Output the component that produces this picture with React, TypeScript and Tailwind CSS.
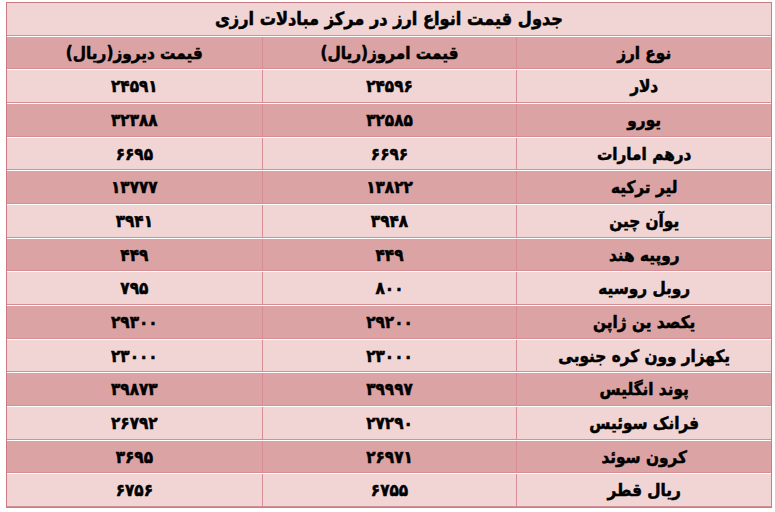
import React from "react";

const toFa = (s: string) => s.replace(/\d/g, (d) => "۰۱۲۳۴۵۶۷۸۹"[Number(d)]);

const rows: [string, string, string][] = [
  ["دلار", "24596", "24591"],
  ["یورو", "32585", "32388"],
  ["درهم امارات", "6696", "6695"],
  ["لیر ترکیه", "13822", "13777"],
  ["یوآن چین", "3948", "3941"],
  ["روپیه هند", "449", "449"],
  ["روبل روسیه", "800", "795"],
  ["یکصد ین ژاپن", "29200", "29300"],
  ["یکهزار وون کره جنوبی", "23000", "23000"],
  ["پوند انگلیس", "39997", "39873"],
  ["فرانک سوئیس", "27290", "26792"],
  ["کرون سوئد", "26971", "3695"],
  ["ریال قطر", "6755", "6756"],
];

const Row = ({ cells, dark }: { cells: string[]; dark: boolean }) => (
  <div
    className={`flex-1 grid grid-cols-3 border-t border-t-white border-b border-b-[#d68d93] ${
      dark ? "bg-[#dca3a4]" : "bg-[#f1d5d4]"
    }`}
  >
    {cells.map((c, i) => (
      <div
        key={i}
        className={`flex items-center justify-center pt-[2px] ${i < 2 ? "border-l border-l-[#d68d93]" : ""}`}
      >
        {c}
      </div>
    ))}
  </div>
);

export default function App() {
  return (
    <div className="w-[775px] h-[512px] bg-white pt-[2px] pl-[6px]">
      <div
        dir="rtl"
        className="w-[766px] h-[506px] flex flex-col border border-[#c97b82] text-[17px] font-bold text-black [-webkit-text-stroke:0.5px_black]"
        style={{ fontFamily: '"DejaVu Sans Condensed", "DejaVu Sans", sans-serif' }}
      >
        <div className="flex-1 flex items-center justify-center bg-[#f1d5d4] border-b border-b-[#d68d93] text-[18px]">
          جدول قیمت انواع ارز در مرکز مبادلات ارزی
        </div>
        <Row cells={["نوع ارز", "قیمت امروز(ریال)", "قیمت دیروز(ریال)"]} dark />
        {rows.map((r, i) => (
          <Row key={r[0]} cells={[r[0], toFa(r[1]), toFa(r[2])]} dark={i % 2 === 1} />
        ))}
      </div>
    </div>
  );
}
